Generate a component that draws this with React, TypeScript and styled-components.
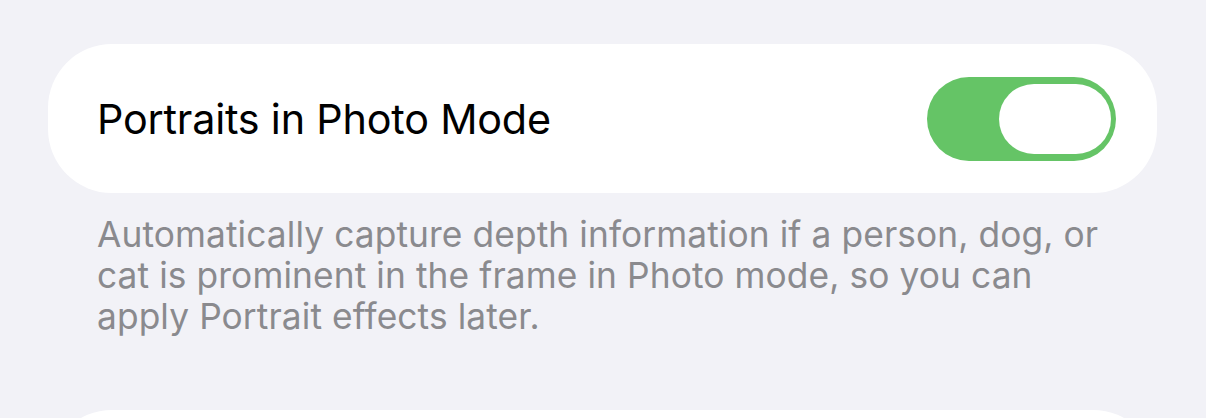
import styled, { createGlobalStyle } from "styled-components";
import { useState } from "react";

const GlobalStyle = createGlobalStyle`
  html, body {
    margin: 0;
    padding: 0;
    background: #f2f2f7;
    font-family: "Inter", "Noto Sans", sans-serif;
    -webkit-font-smoothing: antialiased;
  }
`;

const Page = styled.div`
  display: flex;
  flex-direction: column;
  padding: 44px 49px 0 48px;
  height: 418px;
  box-sizing: border-box;
  overflow: hidden;
`;

const Group = styled.div`
  background: #ffffff;
  border-radius: 64px;
  min-height: 149px;
  flex-shrink: 0;
`;

const Row = styled.div`
  display: flex;
  align-items: center;
  justify-content: space-between;
  height: 149px;
  padding: 0 41px 0 49px;
`;

const Label = styled.span`
  font-size: 41.3px;
  color: #000;
  letter-spacing: -0.2px;
`;

const Footer = styled.p`
  margin: 21px 49px 73px 49px;
  font-size: 35.3px;
  line-height: 41px;
  color: #8a8a8e;
  letter-spacing: 0.1px;
`;

const Track = styled.button<{ on: boolean }>`
  display: flex;
  align-items: center;
  justify-content: ${(p) => (p.on ? "flex-end" : "flex-start")};
  width: 189px;
  height: 84px;
  padding: 0 5px;
  border: none;
  border-radius: 42px;
  background: ${(p) => (p.on ? "#65c466" : "#e9e9eb")};
  cursor: pointer;
`;

const Knob = styled.span`
  width: 112px;
  height: 70px;
  border-radius: 35px;
  background: #ffffff;
`;

const Switch = ({ on, onToggle }: { on: boolean; onToggle: () => void }) => (
  <Track on={on} onClick={onToggle} aria-pressed={on}>
    <Knob />
  </Track>
);

export default function App() {
  const [portraits, setPortraits] = useState(true);

  return (
    <>
      <GlobalStyle />
      <Page>
        <Group>
          <Row>
            <Label>Portraits in Photo Mode</Label>
            <Switch on={portraits} onToggle={() => setPortraits(!portraits)} />
          </Row>
        </Group>
        <Footer>
          Automatically capture depth information if a person, dog, or cat is
          prominent in the frame in Photo mode, so you can apply Portrait
          effects later.
        </Footer>
        <Group />
      </Page>
    </>
  );
}
